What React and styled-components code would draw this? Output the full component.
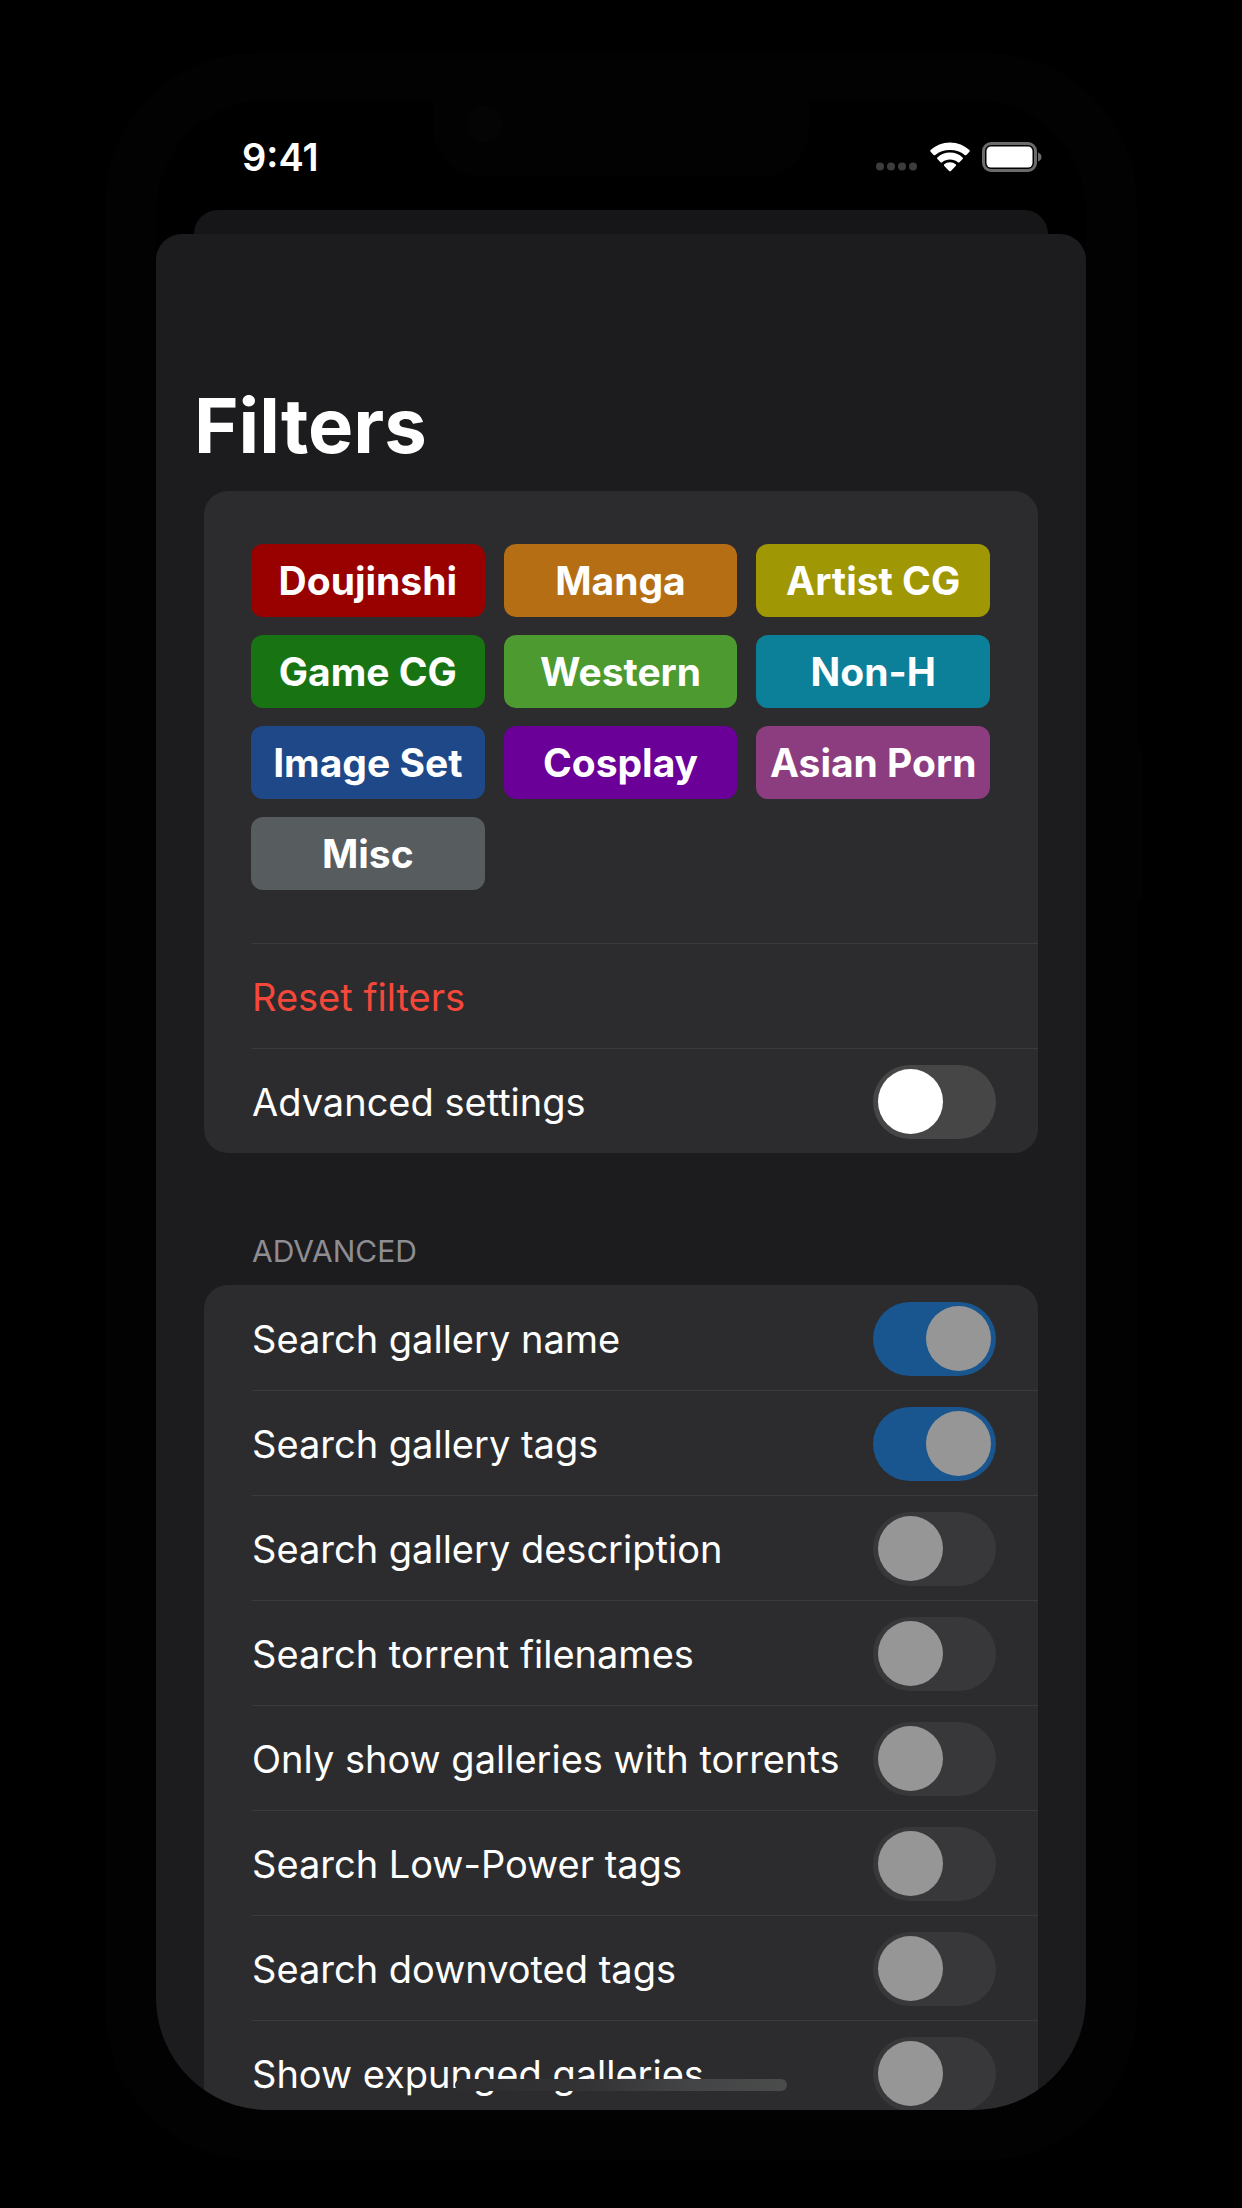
import React, { useState } from "react";
import styled, { createGlobalStyle } from "styled-components";

const GlobalStyle = createGlobalStyle`
  *, *::before, *::after { box-sizing: border-box; }
  body {
    margin: 0;
    background: #000;
    color: #fff;
    font-family: Inter, "Liberation Sans", sans-serif;
  }
`;

const Page = styled.main`
  height: 100vh;
  padding: 53px 105px 48px;
  overflow: hidden;
`;

const Device = styled.div`
  position: relative;
  height: 100%;
  padding: 47px 51px 50px;
  border-radius: 150px;
  background: #020202;
`;

const SideButton = styled.span`
  position: absolute;
  top: 692px;
  right: -6px;
  width: 6px;
  height: 156px;
  border-radius: 0 3px 3px 0;
  background: #020202;
`;

const Screen = styled.div`
  position: relative;
  display: flex;
  flex-direction: column;
  height: 100%;
  border-radius: 112px;
  background: #000;
  overflow: hidden;
`;

const Notch = styled.div`
  position: absolute;
  top: 0;
  left: 50%;
  width: 376px;
  height: 77px;
  margin-left: -188px;
  border-radius: 0 0 48px 48px;
  background: #020202;
`;

const Camera = styled.span`
  position: absolute;
  top: 6px;
  left: 34px;
  width: 36px;
  height: 36px;
  border-radius: 50%;
  background: #040405;
`;

const StatusBar = styled.header`
  position: relative;
  display: flex;
  align-items: center;
  justify-content: space-between;
  flex: none;
  height: 110px;
  padding: 4px 44px 0 86px;
`;

const Clock = styled.time`
  font-size: 38px;
  font-weight: 600;
  line-height: 48px;
`;

const StatusIcons = styled.div`
  display: flex;
  align-items: center;
  gap: 12px;
`;

const BackSheet = styled.div`
  flex: none;
  height: 48px;
  margin: 0 38px -24px;
  border-radius: 24px 24px 0 0;
  background: #161618;
`;

const Sheet = styled.section`
  position: relative;
  flex: 1;
  min-height: 0;
  padding: 143px 48px 0;
  border-radius: 26px 26px 0 0;
  background: #1c1c1e;
  overflow: hidden;
`;

const Title = styled.h1`
  margin: 0 -10px 18px;
  font-size: 76px;
  font-weight: 700;
  line-height: 96px;
`;

const Card = styled.div`
  border-radius: 24px;
  background: #2c2c2e;
  overflow: hidden;
`;

const CategoryGrid = styled.div`
  display: grid;
  grid-template-columns: repeat(3, 1fr);
  gap: 18px 19px;
  padding: 53px 48px 53px 47px;
`;

const CategoryButton = styled.button`
  height: 73px;
  padding: 0;
  border: 0;
  border-radius: 12px;
  background: ${(p) => p.$color};
  color: #fff;
  font-family: inherit;
  font-size: 39px;
  font-weight: 700;
  line-height: 48px;
  white-space: nowrap;
  opacity: ${(p) => (p["aria-pressed"] ? 1 : 0.4)};
`;

const Row = styled.div`
  display: flex;
  align-items: center;
  justify-content: space-between;
  height: 105px;
  margin-left: 48px;
  padding: 1px 42px 0 0;
  border-top: 1px solid ${(p) => (p.$first ? "transparent" : "#3b3b3d")};
`;

const RowLabel = styled.label`
  font-size: 38px;
  line-height: 48px;
  white-space: nowrap;
`;

const ResetButton = styled.button`
  padding: 0;
  border: 0;
  background: none;
  color: #f5483b;
  font-family: inherit;
  font-size: 38px;
  line-height: 48px;
`;

const Switch = styled.input`
  appearance: none;
  flex: none;
  display: flex;
  align-items: center;
  justify-content: flex-start;
  width: 123px;
  height: 74px;
  margin: 0;
  padding: 0 5px;
  border-radius: 37px;
  background: #464647;

  &::before {
    content: "";
    width: 65px;
    height: 65px;
    border-radius: 50%;
    background: #fff;
  }
  &:checked { justify-content: flex-end; background: #1f8bf0; }
  &:disabled { background: #38383a; }
  &:disabled:checked { background: #19568f; }
  &:disabled::before { background: #969697; }
`;

const SectionTitle = styled.h2`
  margin: 78px 48px 14px;
  color: #8d8d92;
  font-size: 30px;
  font-weight: 400;
  line-height: 40px;
`;

const HomeIndicator = styled.div`
  position: absolute;
  left: 50%;
  bottom: 19px;
  width: 332px;
  height: 12px;
  margin-left: -166px;
  border-radius: 6px;
  background: linear-gradient(90deg, #2d2d2f, #333335 40%, #434445 70%, #4a4b4b);
`;

const CATEGORIES = [
  ["Doujinshi", "#990000"],
  ["Manga", "#b56e13"],
  ["Artist CG", "#9f9804"],
  ["Game CG", "#187413"],
  ["Western", "#4c9a30"],
  ["Non-H", "#0c7f99"],
  ["Image Set", "#1e4888"],
  ["Cosplay", "#6b0099"],
  ["Asian Porn", "#8c3d7f"],
  ["Misc", "#575c5e"],
];

const OPTIONS = [
  ["Search gallery name", true],
  ["Search gallery tags", true],
  ["Search gallery description", false],
  ["Search torrent filenames", false],
  ["Only show galleries with torrents", false],
  ["Search Low-Power tags", false],
  ["Search downvoted tags", false],
  ["Show expunged galleries", false],
];

function CellularDots() {
  return (
    <svg width="42" height="30" viewBox="0 0 42 30" fill="#3c3c3d" aria-hidden="true">
      {[4, 15, 26, 37].map((x) => (
        <circle key={x} cx={x} cy="24.5" r="4" />
      ))}
    </svg>
  );
}

function WifiIcon() {
  return (
    <svg width="40" height="30" viewBox="0 0 40 30" fill="#fff" aria-hidden="true">
      <path d="M20 0.500C12.400 0.500 5.600 3.400 0.600 8.100c-.5.5-.5 1.200 0 1.700l3 3.100c.5.5 1.200.5 1.700 0C9.100 9.300 14.300 7.900 20 7.900s10.900 1.400 14.700 5c.5.5 1.200.5 1.700 0l3-3.100c.5-.5.5-1.200 0-1.700C34.400 3.400 27.600.5 20 .5z" />
      <path d="M20 10.500c-4.900 0-9.300 1.900-12.600 4.900-.5.5-.5 1.200 0 1.700l3.100 3.100c.5.5 1.200.5 1.700 0 2.100-1.900 4.800-2.700 7.800-2.700s5.700.8 7.800 2.700c.5.5 1.200.5 1.700 0l3.100-3.100c.5-.5.5-1.200 0-1.700C29.300 12.400 24.900 10.500 20 10.500z" />
      <path d="M20 20.300c-2.200 0-4.200.8-5.700 2-.5.4-.5 1.100 0 1.600l4.800 5c.5.5 1.300.5 1.800 0l4.800-5c.5-.5.5-1.200 0-1.600-1.500-1.200-3.500-2-5.700-2z" />
    </svg>
  );
}

function BatteryIcon() {
  return (
    <svg width="60" height="30" viewBox="0 0 60 30" aria-hidden="true">
      <rect x="1.500" y="1.500" width="52" height="27" rx="7.500" fill="none" stroke="#6a6c6b" strokeWidth="3" />
      <rect x="4.500" y="4.500" width="46" height="21" rx="4.500" fill="#fff" />
      <path d="M56 10.500v9c2.200-.7 3.500-2.400 3.500-4.500s-1.300-3.800-3.500-4.500z" fill="#6a6c6b" />
    </svg>
  );
}

export default function App() {
  const [active, setActive] = useState(() => CATEGORIES.map(() => true));
  const [advanced, setAdvanced] = useState(false);

  const toggle = (index) =>
    setActive((list) => list.map((on, i) => (i === index ? !on : on)));

  return (
    <>
      <GlobalStyle />
      <Page>
        <Device>
          <SideButton />
          <Screen>
            <Notch>
              <Camera />
            </Notch>
            <StatusBar>
              <Clock>9:41</Clock>
              <StatusIcons>
                <CellularDots />
                <WifiIcon />
                <BatteryIcon />
              </StatusIcons>
            </StatusBar>
            <BackSheet />
            <Sheet>
              <Title>Filters</Title>
              <Card>
                <CategoryGrid>
                  {CATEGORIES.map(([name, color], i) => (
                    <CategoryButton
                      key={name}
                      type="button"
                      $color={color}
                      aria-pressed={active[i]}
                      onClick={() => toggle(i)}
                    >
                      {name}
                    </CategoryButton>
                  ))}
                </CategoryGrid>
                <Row>
                  <ResetButton type="button" onClick={() => setActive(CATEGORIES.map(() => true))}>
                    Reset filters
                  </ResetButton>
                </Row>
                <Row>
                  <RowLabel htmlFor="advanced">Advanced settings</RowLabel>
                  <Switch
                    id="advanced"
                    type="checkbox"
                    checked={advanced}
                    onChange={(e) => setAdvanced(e.target.checked)}
                  />
                </Row>
              </Card>
              <SectionTitle>ADVANCED</SectionTitle>
              <Card>
                {OPTIONS.map(([name, on], i) => (
                  <Row key={name} $first={i === 0}>
                    <RowLabel htmlFor={`option-${i}`}>{name}</RowLabel>
                    <Switch
                      id={`option-${i}`}
                      type="checkbox"
                      defaultChecked={on}
                      disabled={!advanced}
                    />
                  </Row>
                ))}
              </Card>
            </Sheet>
            <HomeIndicator />
          </Screen>
        </Device>
      </Page>
    </>
  );
}
